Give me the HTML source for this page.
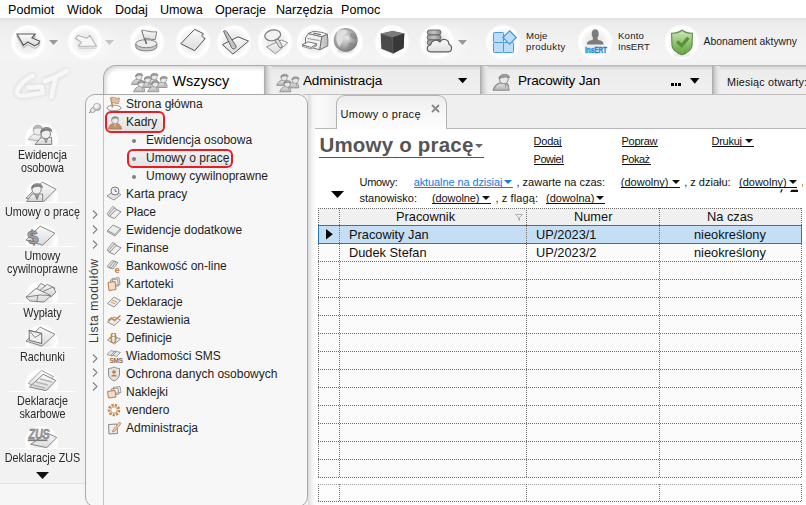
<!DOCTYPE html><html><head><meta charset="utf-8"><style>
*{margin:0;padding:0;box-sizing:border-box}
html,body{width:806px;height:505px;overflow:hidden}
body{position:relative;background:#f2f2f2;font-family:"Liberation Sans",sans-serif;color:#000}
.a{position:absolute;white-space:nowrap}
.u{text-decoration:underline}
.circ{position:absolute;border-radius:50%;background:radial-gradient(circle closest-side,#e6e6e6 0,#eeeeee 45%,#f8f8f8 68%,#fff 80%,#fff 86%,rgba(255,255,255,0) 100%)}
svg{position:absolute;overflow:visible}
</style></head><body>
<div class="a" style="left:0;top:18px;width:806px;height:48px;background:linear-gradient(#e4e4e4 0,#ececec 5px,#f1f1f1 22px,#f4f4f4 40px,#f2f2f2 48px)"></div>
<div class="a" style="left:0;top:483px;width:86px;height:22px;background:#f6f6f6;border-top:1px solid #e2e2e2"></div>
<div class="a" style="left:0;top:0;width:806px;height:18px;background:#fff"></div>
<div class="a " style="left:8px;top:4.33px;font-size:12.6px;line-height:12.6px;color:#000;font-weight:normal;letter-spacing:0px;">Podmiot</div>
<div class="a " style="left:67px;top:4.33px;font-size:12.6px;line-height:12.6px;color:#000;font-weight:normal;letter-spacing:0px;">Widok</div>
<div class="a " style="left:115px;top:4.33px;font-size:12.6px;line-height:12.6px;color:#000;font-weight:normal;letter-spacing:0px;">Dodaj</div>
<div class="a " style="left:160px;top:4.33px;font-size:12.6px;line-height:12.6px;color:#000;font-weight:normal;letter-spacing:0px;">Umowa</div>
<div class="a " style="left:215px;top:4.33px;font-size:12.6px;line-height:12.6px;color:#000;font-weight:normal;letter-spacing:0px;">Operacje</div>
<div class="a " style="left:276px;top:4.33px;font-size:12.6px;line-height:12.6px;color:#000;font-weight:normal;letter-spacing:0px;">Narzędzia</div>
<div class="a " style="left:341px;top:4.33px;font-size:12.6px;line-height:12.6px;color:#000;font-weight:normal;letter-spacing:0px;">Pomoc</div>
<div class="a" style="left:8px;top:23px;width:56px;height:38px;border-radius:19px;background:radial-gradient(ellipse closest-side,rgba(255,255,255,0.45),rgba(255,255,255,0.2) 70%,rgba(255,255,255,0))"></div>
<div class="a" style="left:64px;top:23px;width:57px;height:38px;border-radius:19px;background:radial-gradient(ellipse closest-side,rgba(255,255,255,0.45),rgba(255,255,255,0.2) 70%,rgba(255,255,255,0))"></div>
<div class="a" style="left:418px;top:23px;width:56px;height:38px;border-radius:19px;background:radial-gradient(ellipse closest-side,rgba(255,255,255,0.45),rgba(255,255,255,0.2) 70%,rgba(255,255,255,0))"></div>
<div class="circ" style="left:10px;top:24px;width:36px;height:36px"></div>
<div class="circ" style="left:66.7px;top:24px;width:36px;height:36px"></div>
<div class="circ" style="left:129px;top:24px;width:36px;height:36px"></div>
<div class="circ" style="left:175px;top:24px;width:36px;height:36px"></div>
<div class="circ" style="left:216px;top:24px;width:36px;height:36px"></div>
<div class="circ" style="left:257px;top:24px;width:36px;height:36px"></div>
<div class="circ" style="left:296px;top:24px;width:36px;height:36px"></div>
<div class="circ" style="left:328px;top:24px;width:36px;height:36px"></div>
<div class="circ" style="left:374px;top:24px;width:36px;height:36px"></div>
<div class="circ" style="left:419px;top:24px;width:36px;height:36px"></div>
<div class="circ" style="left:485px;top:24px;width:36px;height:36px"></div>
<div class="circ" style="left:577px;top:24px;width:36px;height:36px"></div>
<div class="circ" style="left:664px;top:24px;width:36px;height:36px"></div>
<svg style="left:48.5px;top:40px" width="9" height="5"><path d="M0 0H9L4.5 5Z" fill="#999"/></svg>
<svg style="left:105px;top:40px" width="9" height="5"><path d="M0 0H9L4.5 5Z" fill="#c4c4c4"/></svg>
<svg style="left:458px;top:40px" width="9" height="5"><path d="M0 0H9L4.5 5Z" fill="#999"/></svg>
<svg style="left:0;top:0" width="806" height="70">
<defs>
<linearGradient id="papg" x1="0" y1="0" x2="0" y2="1"><stop offset="0" stop-color="#fafafa"/><stop offset="1" stop-color="#dcdcdc"/></linearGradient>
<radialGradient id="gg" cx="40%" cy="35%" r="70%"><stop offset="0" stop-color="#e8e8e8"/><stop offset="0.55" stop-color="#a8a8a8"/><stop offset="1" stop-color="#5e5e5e"/></radialGradient>
<linearGradient id="sh" x1="0" y1="0" x2="0" y2="1"><stop offset="0" stop-color="#cfe5bd"/><stop offset="0.5" stop-color="#92c472"/><stop offset="1" stop-color="#5fa23a"/></linearGradient>
<linearGradient id="cl" x1="0" y1="0" x2="0" y2="1"><stop offset="0" stop-color="#fbfbfb"/><stop offset="1" stop-color="#dedede"/></linearGradient>
<linearGradient id="db" x1="0" y1="0" x2="1" y2="0"><stop offset="0" stop-color="#9a9a9a"/><stop offset="0.5" stop-color="#c4c4c4"/><stop offset="1" stop-color="#8a8a8a"/></linearGradient>
</defs>
<!-- back arrow -->
<path d="M16.9 36.5 L35.3 36.5 L31.8 40.3 L39.8 43.8 L38.1 46.6 L34.6 48.3 L27.7 44.5 L23.5 47.9 Z" fill="none" stroke="#c4c4c4" stroke-width="1.3" stroke-linejoin="round"/>
<path d="M16.9 34 L35.3 34 L31.8 37.8 L39.8 41.3 L38.1 44.1 L34.6 45.8 L27.7 42 L23.5 45.4 Z" fill="url(#papg)" stroke="#5a5a5a" stroke-width="1.15" stroke-linejoin="round"/>
<!-- forward arrow (disabled) -->
<path d="M78.8 48.2 L96.6 48.2" stroke="#d2d2d2" stroke-width="1.3"/>
<path d="M75.3 38.3 L77.8 35.3 L86.7 38.3 L89.7 35.3 L96.6 46.2 L78.3 46.2 L81.2 42.3 Z" fill="#f6f6f6" stroke="#b4b4b4" stroke-width="1.1" stroke-linejoin="round"/>
<!-- flag on disc -->
<path d="M135.8 43.7 v3.2 a10.5 4 0 0 0 21 0 v-3.2" fill="#c8c8c8" stroke="#7a7a7a" stroke-width="0.9"/>
<ellipse cx="146.3" cy="43.7" rx="10.5" ry="4" fill="#ececec" stroke="#7a7a7a" stroke-width="0.9"/>
<path d="M146.5 44 L142.3 31" stroke="#6a6a6a" stroke-width="1.6"/>
<path d="M141.8 30.5 C145 29.5 148 32.5 156.8 31.8 L155.2 39.5 C150 40 147 37.5 144.2 38.4 Z" fill="url(#papg)" stroke="#777" stroke-width="0.9"/>
<!-- page -->
<path d="M180.8 43.7 L194.7 29.3 L203.2 33.6 C202.5 36 203.5 38 205.1 38.6 L194.7 50.7 Z" fill="url(#papg)" stroke="#555" stroke-width="1" stroke-linejoin="round"/>
<path d="M203.2 33.6 C201 34.5 201.5 37.5 205.1 38.6" fill="#d4d4d4" stroke="#666" stroke-width="0.9"/>
<!-- pen on paper -->
<path d="M222.5 44.6 L238 36.8 L248.5 41.1 L232.9 54.1 Z" fill="url(#papg)" stroke="#555" stroke-width="1" stroke-linejoin="round"/>
<path d="M223.5 31.2 C225 30 226.5 31 227.5 33 L236 46 C236.5 49 233 50 231.5 47.5 Z" fill="#c6c6c6" stroke="#555" stroke-width="0.9"/>
<!-- magnifier over paper -->
<path d="M266.6 46.8 L281.6 40 L287.8 42.7 L275.5 53.7 Z" fill="url(#papg)" stroke="#888" stroke-width="0.9" stroke-linejoin="round"/>
<path d="M276.5 39.5 L280.5 46" stroke="#777" stroke-width="4.2" stroke-linecap="round"/>
<path d="M276.5 39.5 L280.5 46" stroke="#dedede" stroke-width="2.4" stroke-linecap="round"/>
<ellipse cx="272.7" cy="35.3" rx="8" ry="5.3" transform="rotate(-12 272.7 35.3)" fill="#f2f2f2" stroke="#7a7a7a" stroke-width="1.2"/>
<!-- printer -->
<linearGradient id="prs" x1="0" y1="0" x2="1" y2="0"><stop offset="0" stop-color="#d8d8d8"/><stop offset="1" stop-color="#b8b8b8"/></linearGradient>
<path d="M305.5 37.9 L308.3 33.5 L321.8 36.7 L319.8 49.8 L305.5 45.9 Z" fill="#f0f0f0" stroke="#6a6a6a" stroke-width="0.9" stroke-linejoin="round"/>
<path d="M308.3 33.5 L313.1 31.4 C318 31.5 324 32.5 327.4 34.3 L321.8 36.7 Z" fill="#fafafa" stroke="#6a6a6a" stroke-width="0.9" stroke-linejoin="round"/>
<path d="M321.8 36.7 L327.4 34.3 C328 38 328 42 327.8 45.9 L319.8 49.8 Z" fill="url(#prs)" stroke="#6a6a6a" stroke-width="0.9" stroke-linejoin="round"/>
<path d="M313.5 32.6 L321.5 34.2 L320.5 35.2 L312.8 33.6 Z" fill="#6e6e6e"/>
<path d="M307.5 38.5 L319.5 40.5" stroke="#9a9a9a" stroke-width="1.2"/>
<path d="M302 46.2 L308.3 43.4 L317 45.4 L311.1 48.9 Z" fill="#f4f4f4" stroke="#7a7a7a" stroke-width="0.8" stroke-linejoin="round"/>
<path d="M302 44.7 L308.3 41.9 L317 43.9 L311.1 47.4 Z" fill="#fbfbfb" stroke="#6a6a6a" stroke-width="0.9" stroke-linejoin="round"/>
<!-- globe -->
<radialGradient id="gg2" cx="45%" cy="40%" r="62%"><stop offset="0" stop-color="#e2e2e2"/><stop offset="0.5" stop-color="#b4b4b4"/><stop offset="0.85" stop-color="#8a8a8a"/><stop offset="1" stop-color="#6e6e6e"/></radialGradient>
<ellipse cx="345" cy="51" rx="8" ry="2" fill="#000" opacity="0.1"/>
<circle cx="345.7" cy="39.9" r="11.9" fill="url(#gg2)"/>
<path d="M338 31 C341 29 346 29.5 348 31.5 C347 34 344 34 342.5 36.5 C343.5 40 341 44 339.5 47 C336 43 335 36 338 31Z" fill="#eaeaea" opacity="0.75"/>
<path d="M350 33 C353 33 356 36 356.5 39 C354 40 352 38.5 350.5 37 Z M349 43 C352 42 355 43 355.5 45 C353 48 350 49.5 347.5 50.5 C347 48 348 45 349 43Z" fill="#7e7e7e" opacity="0.55"/>
<path d="M346 36 C348 35 350 37 349 40 C347 41 345 39 346 36Z" fill="#f0f0f0" opacity="0.6"/>
<!-- cube -->
<path d="M380.7 33.8 L392.5 30.9 L404.3 33.4 L403.6 48 L393.1 53.6 L381.3 48.7 Z" fill="#4a4a4a"/>
<path d="M380.7 33.8 L392.5 30.9 L404.3 33.4 L392.5 37.5 Z" fill="#7a7a7a"/>
<path d="M392.5 37.5 L404.3 33.4 L403.6 48 L393.1 53.6 Z" fill="#383838"/>
<path d="M380.7 33.8 L392.5 37.5 L393.1 53.6" fill="none" stroke="#666" stroke-width="0.6"/>
<!-- database + cloud -->
<g stroke="#5e5e5e" stroke-width="0.9" fill="url(#db)">
<rect x="427.3" y="30" width="13.6" height="5" rx="2.2"/>
<rect x="427.3" y="35" width="13.6" height="5" rx="2.2"/>
<rect x="427.3" y="40" width="13.6" height="5" rx="2.2"/>
</g>
<path d="M430.5 51.8 C426.5 51.8 426 45.5 430.5 45 C431 40.5 437 38.5 440 42 C441.5 38 449 38.5 449 44.5 C452.5 45 452.5 51.8 448.5 51.8 Z" fill="url(#cl)" stroke="#5e5e5e" stroke-width="1.2" stroke-linejoin="round"/>
<!-- moje produkty -->
<g fill="#bcdcf8" stroke="#4a9ae0" stroke-width="1">
<rect x="493.5" y="32.5" width="10" height="10" rx="0.8"/>
<rect x="493.5" y="42.5" width="10" height="10" rx="0.8"/>
<rect x="503.5" y="42.5" width="10" height="10" rx="0.8"/>
<path d="M509.6 30.8 L516.3 37.5 L509.6 44.2 L502.9 37.5 Z" stroke-width="1.3"/>
</g>
<!-- InsERT -->
<ellipse cx="595.2" cy="34" rx="3.5" ry="4.8" fill="#7c7c7c"/>
<path d="M593 38 L597.5 38 L598 40 C602 40.5 603.6 42 603.6 44.6 L586.8 44.6 C586.8 42 588.5 40.5 592.5 40 Z" fill="#7c7c7c"/>
<text x="0" y="0" transform="translate(585,52.6) scale(0.78,1)" font-family="Liberation Sans" font-weight="bold" font-size="8.2" fill="#1a86d9" stroke="#1a86d9" stroke-width="0.35">InsERT</text>
<!-- shield -->
<ellipse cx="682" cy="55" rx="9" ry="2" fill="#000" opacity="0.07"/>
<path d="M682 30.2 C679 32.3 675 33.3 671.6 33.3 L672 45.8 C673 50 677 53 682 54.8 C687 53 691 50 692 45.8 L692.4 33.3 C689 33.3 685 32.3 682 30.2 Z" fill="url(#sh)" stroke="#5e8a4a" stroke-width="1.1"/>
<path d="M682 30.8 L682 54.2" stroke="#fff" stroke-width="0.5" opacity="0.25"/>
<path d="M677.2 41.4 L681.7 45.6 L688.3 37.8" fill="none" stroke="#5a8f3e" stroke-width="3.3" stroke-linejoin="miter"/>
</svg>
<div class="a " style="left:526px;top:30.87px;font-size:9.6px;line-height:9.6px;color:#1a1a1a;font-weight:normal;letter-spacing:0.2px;">Moje</div>
<div class="a " style="left:526px;top:42.17px;font-size:9.6px;line-height:9.6px;color:#1a1a1a;font-weight:normal;letter-spacing:0.35px;">produkty</div>
<div class="a " style="left:618px;top:30.87px;font-size:9.6px;line-height:9.6px;color:#1a1a1a;font-weight:normal;letter-spacing:0.2px;">Konto</div>
<div class="a " style="left:618px;top:42.17px;font-size:9.6px;line-height:9.6px;color:#1a1a1a;font-weight:normal;letter-spacing:0px;">InsERT</div>
<div class="a " style="left:703.5px;top:36.80px;font-size:10.4px;line-height:10.4px;color:#1a1a1a;font-weight:normal;letter-spacing:0px;">Abonament aktywny</div>
<svg style="left:0;top:60px" width="86" height="45"><defs><filter id="gts" x="-30%" y="-30%" width="160%" height="160%"><feGaussianBlur in="SourceAlpha" stdDeviation="2.2"/><feComponentTransfer><feFuncA type="linear" slope="0.16"/></feComponentTransfer><feMerge><feMergeNode/><feMergeNode in="SourceGraphic"/></feMerge></filter></defs><g filter="url(#gts)" fill="none" stroke="#f7f7f7" stroke-width="4.2" stroke-linecap="round" stroke-linejoin="round"><path d="M32.8 15.9 C26 18 18 26 16.9 31.8 C16 36 22 36.5 27 35.5 C33 34.5 39 33.5 42.7 32.8 L41.7 26.8 L28.8 27.3"/><path d="M45 21 C52 19 60 15 66.5 10.9"/><path d="M55.6 17.9 C54 24 52.5 30 51.6 36.7"/></g></svg>
<div class="a" style="left:22px;top:121px;width:40px;height:24px;overflow:hidden"><div class="circ" style="left:2px;top:0.5px;width:35px;height:35px"></div></div>
<div class="a" style="left:9px;top:145px;width:66px;height:1px;background:#fff"></div>
<div class="a" style="left:0;width:85px;text-align:center;top:149.86px;font-size:10.8px;line-height:10.8px;color:#2a2a2a;transform:scaleY(1.13);transform-origin:0 9.14px">Ewidencja</div>
<div class="a" style="left:0;width:85px;text-align:center;top:162.86px;font-size:10.8px;line-height:10.8px;color:#2a2a2a;transform:scaleY(1.13);transform-origin:0 9.14px">osobowa</div>
<div class="a" style="left:22px;top:178px;width:40px;height:24px;overflow:hidden"><div class="circ" style="left:2px;top:0.5px;width:35px;height:35px"></div></div>
<div class="a" style="left:9px;top:202px;width:66px;height:1px;background:#fff"></div>
<div class="a" style="left:0;width:85px;text-align:center;top:206.86px;font-size:10.8px;line-height:10.8px;color:#2a2a2a;transform:scaleY(1.13);transform-origin:0 9.14px">Umowy o pracę</div>
<div class="a" style="left:22px;top:222px;width:40px;height:24px;overflow:hidden"><div class="circ" style="left:2px;top:0.5px;width:35px;height:35px"></div></div>
<div class="a" style="left:9px;top:246px;width:66px;height:1px;background:#fff"></div>
<div class="a" style="left:0;width:85px;text-align:center;top:250.86px;font-size:10.8px;line-height:10.8px;color:#2a2a2a;transform:scaleY(1.13);transform-origin:0 9.14px">Umowy</div>
<div class="a" style="left:0;width:85px;text-align:center;top:263.86px;font-size:10.8px;line-height:10.8px;color:#2a2a2a;transform:scaleY(1.13);transform-origin:0 9.14px">cywilnoprawne</div>
<div class="a" style="left:22px;top:279px;width:40px;height:24px;overflow:hidden"><div class="circ" style="left:2px;top:0.5px;width:35px;height:35px"></div></div>
<div class="a" style="left:9px;top:303px;width:66px;height:1px;background:#fff"></div>
<div class="a" style="left:0;width:85px;text-align:center;top:307.86px;font-size:10.8px;line-height:10.8px;color:#2a2a2a;transform:scaleY(1.13);transform-origin:0 9.14px">Wypłaty</div>
<div class="a" style="left:22px;top:323px;width:40px;height:24px;overflow:hidden"><div class="circ" style="left:2px;top:0.5px;width:35px;height:35px"></div></div>
<div class="a" style="left:9px;top:347px;width:66px;height:1px;background:#fff"></div>
<div class="a" style="left:0;width:85px;text-align:center;top:351.86px;font-size:10.8px;line-height:10.8px;color:#2a2a2a;transform:scaleY(1.13);transform-origin:0 9.14px">Rachunki</div>
<div class="a" style="left:22px;top:367px;width:40px;height:24px;overflow:hidden"><div class="circ" style="left:2px;top:0.5px;width:35px;height:35px"></div></div>
<div class="a" style="left:9px;top:391px;width:66px;height:1px;background:#fff"></div>
<div class="a" style="left:0;width:85px;text-align:center;top:395.86px;font-size:10.8px;line-height:10.8px;color:#2a2a2a;transform:scaleY(1.13);transform-origin:0 9.14px">Deklaracje</div>
<div class="a" style="left:0;width:85px;text-align:center;top:408.86px;font-size:10.8px;line-height:10.8px;color:#2a2a2a;transform:scaleY(1.13);transform-origin:0 9.14px">skarbowe</div>
<div class="a" style="left:22px;top:424px;width:40px;height:24px;overflow:hidden"><div class="circ" style="left:2px;top:0.5px;width:35px;height:35px"></div></div>
<div class="a" style="left:9px;top:448px;width:66px;height:1px;background:#fff"></div>
<div class="a" style="left:0;width:85px;text-align:center;top:452.86px;font-size:10.8px;line-height:10.8px;color:#2a2a2a;transform:scaleY(1.13);transform-origin:0 9.14px">Deklaracje ZUS</div>
<svg style="left:0;top:0" width="86" height="505">
<defs>
<linearGradient id="ng" x1="0" y1="0" x2="0" y2="1"><stop offset="0" stop-color="#fbfbfb"/><stop offset="1" stop-color="#dadada"/></linearGradient>
<linearGradient id="ndk" x1="0" y1="0" x2="0" y2="1"><stop offset="0" stop-color="#9a9a9a"/><stop offset="1" stop-color="#5e5e5e"/></linearGradient>
<linearGradient id="nsk" x1="0" y1="0" x2="0" y2="1"><stop offset="0" stop-color="#f4f4f4"/><stop offset="1" stop-color="#cfcfcf"/></linearGradient>
</defs>
<g stroke="#7a7a7a" stroke-width="0.9" stroke-linejoin="round">
<!-- 1 people -->
<path d="M28.2 139.5 L33 134.5 L40 134 L41 141 Z" fill="url(#ng)" stroke="#aaa"/>
<circle cx="37.9" cy="130.5" r="4.6" fill="#eee" stroke="#aaa"/>
<path d="M33.2 129.5 C33 124 42 123.5 42.6 129 C40 127.5 36 127.5 33.2 129.5Z" fill="#bbb" stroke="#aaa"/>
<path d="M35 144.5 L40.5 138 L51.5 137.5 L51.7 144.5 Z" fill="url(#nsk)"/>
<path d="M44 138 L46 143 L48 138" fill="#aaa" stroke="#888"/>
<circle cx="45.8" cy="134" r="4.7" fill="#efefef"/>
<path d="M40.8 133 C40 126 52 126 51.7 131.5 C49 129.5 44 129.5 40.8 133Z" fill="url(#ndk)"/>
<!-- 2 person + card -->
<path d="M25.9 198.2 L42.3 182.1 L56.2 189.3 L43.8 201.4 Z" fill="url(#ng)"/>
<path d="M26.5 201.5 L32 194 L42.6 194 L42.6 201.5 Z" fill="url(#nsk)"/>
<path d="M35 194.5 L37 199.5 L39 194.5" fill="#999"/>
<circle cx="36.6" cy="189.5" r="4.6" fill="#efefef"/>
<path d="M31.6 188.5 C31 182.5 42.6 182 42.4 187.5 C40 185.8 35 185.8 31.6 188.5Z" fill="url(#ndk)"/>
<!-- 3 $ card -->
<path d="M25.9 240.1 L40.2 226.1 L55 233.3 L42.6 245.1 Z" fill="url(#ng)"/>
</g>
<text x="27.5" y="243.5" font-family="Liberation Sans" font-weight="bold" font-size="19" fill="#a8a8a8" stroke="#6e6e6e" stroke-width="0.7" transform="rotate(-8 35 236)">$</text>
<g stroke="#7a7a7a" stroke-width="0.9" stroke-linejoin="round">
<!-- 4 envelope fan -->
<path d="M36 290 L40.8 283.4 L52 289 L47 296 Z" fill="url(#nsk)"/>
<path d="M39 291 L47.3 284.3 L55 288 L50 296 Z" fill="url(#nsk)"/>
<path d="M42 292 L53 287 L55.9 292 L50.9 297 Z" fill="url(#nsk)"/>
<path d="M25.9 297.1 L36 288.5 L50.9 295.6 L44 302 L30 301 Z" fill="url(#ng)"/>
<path d="M25.9 297.1 L40 295 L50.9 295.6 M36.6 302 L38 295" fill="none"/>
<!-- 5 envelope card -->
<path d="M25.9 341.1 L40.2 327.1 L55 334.3 L42 346.1 Z" fill="url(#ng)"/>
<path d="M29.2 330.4 L41.7 333.4 L41.7 343.5 L29.2 340.2 Z" fill="#f0f0f0" stroke="#777" stroke-width="1.1"/>
<path d="M29.2 330.4 L35 337.5 L41.7 333.4" fill="none"/>
<!-- 6 sheets -->
<path d="M28.3 383.2 L41.4 370.4 L53.8 376.7 L40 389 Z" fill="url(#ng)" stroke="#999"/>
<path d="M29.5 387 L43.2 374.3 L55.9 380.5 L46.1 390.6 Z" fill="url(#ng)"/>
<path d="M40 379 L52 382 M36 382 L48 385 M33 385 L45 388" stroke="#b5b5b5" stroke-width="1.3"/>
<!-- 7 ZUS card -->
<path d="M30.7 444.3 L47.3 433.1 L56.8 437.5 L46.7 447.6 Z" fill="url(#ng)"/>
</g>
<text x="0" y="0" transform="translate(28.6,439.3) scale(0.8,1.06)" font-family="Liberation Sans" font-weight="bold" font-style="italic" font-size="13.6" fill="#9a9a9a" stroke="#7a7a7a" stroke-width="0.4" letter-spacing="-0.3">ZUS</text>
<path d="M27.8 440.3 L47.5 440.3" stroke="#7a7a7a" stroke-width="1.6"/>
</svg>
<svg style="left:36px;top:471.5px" width="13" height="7"><path d="M0 0H13L6.5 7Z" fill="#111"/></svg>
<div class="a" style="left:240px;top:65px;width:566px;height:29px;background:linear-gradient(#b9b9b9 0,#b9b9b9 1px,#dcdcdc 2px,#ececec 6px,#f0f0f0 100%)"></div>
<div class="a" style="left:103px;top:65px;width:161px;height:30px;background:#fff;border-top:1px solid #a9a9a9;border-left:1px solid #a9a9a9;border-top-left-radius:13px;box-shadow:inset 2px 2px 4px rgba(0,0,0,0.16)"></div>
<div class="a" style="left:264px;top:66px;width:9px;height:28px;background:linear-gradient(90deg,#a9a9a9,#cdcdcd 30%,#e8e8e8 70%,rgba(240,240,240,0))"></div>
<div class="a" style="left:480px;top:66px;width:9px;height:28px;background:linear-gradient(90deg,#a9a9a9,#cdcdcd 30%,#e8e8e8 70%,rgba(240,240,240,0))"></div>
<div class="a" style="left:712px;top:66px;width:9px;height:28px;background:linear-gradient(90deg,#a9a9a9,#cdcdcd 30%,#e8e8e8 70%,rgba(240,240,240,0))"></div>
<svg style="left:0;top:0" width="520" height="100"><defs><linearGradient id="pb" x1="0" y1="0" x2="0" y2="1"><stop offset="0" stop-color="#e4e4e4"/><stop offset="1" stop-color="#b4b4b4"/></linearGradient><linearGradient id="ph" x1="0" y1="0" x2="0" y2="1"><stop offset="0" stop-color="#b0b0b0"/><stop offset="1" stop-color="#7c7c7c"/></linearGradient></defs><g transform="translate(130.9,72) scale(1.0)"><path d="M0.5 12.5 C1.5 9 4 7.3 6.5 7.3 L9.5 7.3 C11 7.8 11.6 9.5 11.6 12.5 Z" fill="url(#pb)" stroke="#8a8a8a" stroke-width="0.8" stroke-linejoin="round"/><path d="M8.3 7.6 L9.3 11.5 L10.3 7.6Z" fill="#a0a0a0"/><circle cx="8" cy="4.8" r="3.1" fill="#e8e8e8" stroke="#8a8a8a" stroke-width="0.7"/><path d="M4.6 4.6 C4 0.6 12 0.2 12 3.6 C10 2.9 6.8 3 4.6 4.6Z" fill="url(#ph)" stroke="#808080" stroke-width="0.5"/></g><g transform="translate(146.2,72) scale(1.0)"><path d="M0.5 12.5 C1.5 9 4 7.3 6.5 7.3 L9.5 7.3 C11 7.8 11.6 9.5 11.6 12.5 Z" fill="url(#pb)" stroke="#8a8a8a" stroke-width="0.8" stroke-linejoin="round"/><path d="M8.3 7.6 L9.3 11.5 L10.3 7.6Z" fill="#a0a0a0"/><circle cx="8" cy="4.8" r="3.1" fill="#e8e8e8" stroke="#8a8a8a" stroke-width="0.7"/><path d="M4.6 4.6 C4 0.6 12 0.2 12 3.6 C10 2.9 6.8 3 4.6 4.6Z" fill="url(#ph)" stroke="#808080" stroke-width="0.5"/></g><g transform="translate(139.6,75) scale(1.0)"><path d="M0.5 12.5 C1.5 9 4 7.3 6.5 7.3 L9.5 7.3 C11 7.8 11.6 9.5 11.6 12.5 Z" fill="url(#pb)" stroke="#8a8a8a" stroke-width="0.8" stroke-linejoin="round"/><path d="M8.3 7.6 L9.3 11.5 L10.3 7.6Z" fill="#a0a0a0"/><circle cx="8" cy="4.8" r="3.1" fill="#e8e8e8" stroke="#8a8a8a" stroke-width="0.7"/><path d="M4.6 4.6 C4 0.6 12 0.2 12 3.6 C10 2.9 6.8 3 4.6 4.6Z" fill="url(#ph)" stroke="#808080" stroke-width="0.5"/></g><g transform="translate(155.5,75) scale(1.0)"><path d="M0.5 12.5 C1.5 9 4 7.3 6.5 7.3 L9.5 7.3 C11 7.8 11.6 9.5 11.6 12.5 Z" fill="url(#pb)" stroke="#8a8a8a" stroke-width="0.8" stroke-linejoin="round"/><path d="M8.3 7.6 L9.3 11.5 L10.3 7.6Z" fill="#a0a0a0"/><circle cx="8" cy="4.8" r="3.1" fill="#e8e8e8" stroke="#8a8a8a" stroke-width="0.7"/><path d="M4.6 4.6 C4 0.6 12 0.2 12 3.6 C10 2.9 6.8 3 4.6 4.6Z" fill="url(#ph)" stroke="#808080" stroke-width="0.5"/></g><g transform="translate(133.1,79.3) scale(1.0)"><path d="M0.5 12.5 C1.5 9 4 7.3 6.5 7.3 L9.5 7.3 C11 7.8 11.6 9.5 11.6 12.5 Z" fill="url(#pb)" stroke="#8a8a8a" stroke-width="0.8" stroke-linejoin="round"/><path d="M8.3 7.6 L9.3 11.5 L10.3 7.6Z" fill="#a0a0a0"/><circle cx="8" cy="4.8" r="3.1" fill="#e8e8e8" stroke="#8a8a8a" stroke-width="0.7"/><path d="M4.6 4.6 C4 0.6 12 0.2 12 3.6 C10 2.9 6.8 3 4.6 4.6Z" fill="url(#ph)" stroke="#808080" stroke-width="0.5"/></g><g transform="translate(147.2,79.3) scale(1.0)"><path d="M0.5 12.5 C1.5 9 4 7.3 6.5 7.3 L9.5 7.3 C11 7.8 11.6 9.5 11.6 12.5 Z" fill="url(#pb)" stroke="#8a8a8a" stroke-width="0.8" stroke-linejoin="round"/><path d="M8.3 7.6 L9.3 11.5 L10.3 7.6Z" fill="#a0a0a0"/><circle cx="8" cy="4.8" r="3.1" fill="#e8e8e8" stroke="#8a8a8a" stroke-width="0.7"/><path d="M4.6 4.6 C4 0.6 12 0.2 12 3.6 C10 2.9 6.8 3 4.6 4.6Z" fill="url(#ph)" stroke="#808080" stroke-width="0.5"/></g><g transform="translate(276.2,72.9) scale(1.0)"><path d="M0.5 12.5 C1.5 9 4 7.3 6.5 7.3 L9.5 7.3 C11 7.8 11.6 9.5 11.6 12.5 Z" fill="url(#pb)" stroke="#8a8a8a" stroke-width="0.8" stroke-linejoin="round"/><path d="M8.3 7.6 L9.3 11.5 L10.3 7.6Z" fill="#a0a0a0"/><circle cx="8" cy="4.8" r="3.1" fill="#e8e8e8" stroke="#8a8a8a" stroke-width="0.7"/><path d="M4.6 4.6 C4 0.6 12 0.2 12 3.6 C10 2.9 6.8 3 4.6 4.6Z" fill="url(#ph)" stroke="#808080" stroke-width="0.5"/></g><g transform="translate(287.2,75.4) scale(1.0)"><path d="M0.5 12.5 C1.5 9 4 7.3 6.5 7.3 L9.5 7.3 C11 7.8 11.6 9.5 11.6 12.5 Z" fill="url(#pb)" stroke="#8a8a8a" stroke-width="0.8" stroke-linejoin="round"/><path d="M8.3 7.6 L9.3 11.5 L10.3 7.6Z" fill="#a0a0a0"/><circle cx="8" cy="4.8" r="3.1" fill="#e8e8e8" stroke="#8a8a8a" stroke-width="0.7"/><path d="M4.6 4.6 C4 0.6 12 0.2 12 3.6 C10 2.9 6.8 3 4.6 4.6Z" fill="url(#ph)" stroke="#808080" stroke-width="0.5"/></g><g transform="translate(279.2,79.3) scale(1.0)"><path d="M0.5 12.5 C1.5 9 4 7.3 6.5 7.3 L9.5 7.3 C11 7.8 11.6 9.5 11.6 12.5 Z" fill="url(#pb)" stroke="#8a8a8a" stroke-width="0.8" stroke-linejoin="round"/><path d="M8.3 7.6 L9.3 11.5 L10.3 7.6Z" fill="#a0a0a0"/><circle cx="8" cy="4.8" r="3.1" fill="#e8e8e8" stroke="#8a8a8a" stroke-width="0.7"/><path d="M4.6 4.6 C4 0.6 12 0.2 12 3.6 C10 2.9 6.8 3 4.6 4.6Z" fill="url(#ph)" stroke="#808080" stroke-width="0.5"/></g><g transform="translate(492.5,72.5) scale(1.42)"><path d="M0.5 12.5 C1.5 9 4 7.3 6.5 7.3 L9.5 7.3 C11 7.8 11.6 9.5 11.6 12.5 Z" fill="url(#pb)" stroke="#8a8a8a" stroke-width="0.8" stroke-linejoin="round"/><path d="M8.3 7.6 L9.3 11.5 L10.3 7.6Z" fill="#a0a0a0"/><circle cx="8" cy="4.8" r="3.1" fill="#e8e8e8" stroke="#8a8a8a" stroke-width="0.7"/><path d="M4.6 4.6 C4 0.6 12 0.2 12 3.6 C10 2.9 6.8 3 4.6 4.6Z" fill="url(#ph)" stroke="#808080" stroke-width="0.5"/></g></svg>
<div class="a " style="left:172.5px;top:73.71px;font-size:14.4px;line-height:14.4px;color:#000;font-weight:normal;letter-spacing:0px;">Wszyscy</div>
<div class="a " style="left:303px;top:74.39px;font-size:13.6px;line-height:13.6px;color:#000;font-weight:normal;letter-spacing:-0.2px;">Administracja</div>
<div class="a " style="left:518px;top:74.39px;font-size:13.6px;line-height:13.6px;color:#000;font-weight:normal;letter-spacing:-0.2px;">Pracowity Jan</div>
<div class="a" style="left:671px;top:83px;width:2.6px;height:2.6px;background:#000"></div><div class="a" style="left:674.6px;top:83px;width:2.6px;height:2.6px;background:#000"></div><div class="a" style="left:678.2px;top:83px;width:2.6px;height:2.6px;background:#000"></div>
<svg style="left:458px;top:77.8px" width="9.3" height="5.3"><path d="M0 0H9.3L4.65 5.3Z" fill="#000"/></svg>
<svg style="left:689.8px;top:77.7px" width="9.5" height="5.7"><path d="M0 0H9.5L4.75 5.7Z" fill="#000"/></svg>
<div class="a " style="left:727px;top:77.16px;font-size:10.8px;line-height:10.8px;color:#111;font-weight:normal;letter-spacing:0.18px;">Miesiąc otwarty:</div>
<div class="a" style="left:85px;top:94px;width:223px;height:413px;background:#f7f7f7;border:1px solid #a9a9a9;border-radius:10px"></div>
<div class="a" style="left:103px;top:95px;width:1px;height:410px;background:#c4c4c4"></div>
<div class="a" style="left:106px;top:113px;width:57px;height:18px;border-radius:4px;background:linear-gradient(#f2f2f2,#e3e3e3)"></div>
<div class="a" style="left:128px;top:150px;width:103px;height:16px;border-radius:4px;background:linear-gradient(#f2f2f2,#e3e3e3)"></div>
<div class="a" style="left:88.3px;top:343px;font-size:12px;line-height:12px;letter-spacing:0.6px;color:#3a3a3a;transform:rotate(-90deg);transform-origin:0 0">Lista modułów</div>
<svg style="left:91.5px;top:209.8px" width="6" height="9"><path d="M1 0.5 L5 4.5 L1 8.5" fill="none" stroke="#808080" stroke-width="1.1"/></svg>
<svg style="left:91.5px;top:225.0px" width="6" height="9"><path d="M1 0.5 L5 4.5 L1 8.5" fill="none" stroke="#808080" stroke-width="1.1"/></svg>
<svg style="left:91.5px;top:240.1px" width="6" height="9"><path d="M1 0.5 L5 4.5 L1 8.5" fill="none" stroke="#808080" stroke-width="1.1"/></svg>
<svg style="left:91.5px;top:354.3px" width="6" height="9"><path d="M1 0.5 L5 4.5 L1 8.5" fill="none" stroke="#808080" stroke-width="1.1"/></svg>
<svg style="left:91.5px;top:368.2px" width="6" height="9"><path d="M1 0.5 L5 4.5 L1 8.5" fill="none" stroke="#808080" stroke-width="1.1"/></svg>
<svg style="left:91.5px;top:382.1px" width="6" height="9"><path d="M1 0.5 L5 4.5 L1 8.5" fill="none" stroke="#808080" stroke-width="1.1"/></svg>
<svg style="left:0;top:0" width="110" height="120"><defs><radialGradient id="pin" cx="40%" cy="35%" r="70%"><stop offset="0" stop-color="#fff"/><stop offset="0.6" stop-color="#dcdcdc"/><stop offset="1" stop-color="#8c8c8c"/></radialGradient></defs><path d="M89.2 112.8 L92 110.6" stroke="#555" stroke-width="1"/><ellipse cx="93.3" cy="109.8" rx="3.2" ry="2.3" transform="rotate(-35 93.3 109.8)" fill="#ececec" stroke="#8a8a8a" stroke-width="0.8"/><circle cx="97" cy="106.9" r="3.6" fill="url(#pin)" stroke="#9a9a9a" stroke-width="0.6"/></svg>
<div class="a " style="left:126px;top:97.74px;font-size:12.0px;line-height:12.0px;color:#1e1e1e;font-weight:normal;letter-spacing:0px;">Strona główna</div>
<div class="a " style="left:126px;top:115.74px;font-size:12.0px;line-height:12.0px;color:#1e1e1e;font-weight:normal;letter-spacing:0px;">Kadry</div>
<div class="a" style="left:132px;top:138.6px;width:4px;height:4px;border-radius:50%;background:#808080"></div>
<div class="a " style="left:146px;top:133.74px;font-size:12.0px;line-height:12.0px;color:#1e1e1e;font-weight:normal;letter-spacing:0px;">Ewidencja osobowa</div>
<div class="a" style="left:132px;top:156.6px;width:4px;height:4px;border-radius:50%;background:#808080"></div>
<div class="a " style="left:146px;top:151.74px;font-size:12.0px;line-height:12.0px;color:#1e1e1e;font-weight:normal;letter-spacing:0px;">Umowy o pracę</div>
<div class="a" style="left:132px;top:174.6px;width:4px;height:4px;border-radius:50%;background:#808080"></div>
<div class="a " style="left:146px;top:169.74px;font-size:12.0px;line-height:12.0px;color:#1e1e1e;font-weight:normal;letter-spacing:0px;">Umowy cywilnoprawne</div>
<div class="a " style="left:126px;top:187.74px;font-size:12.0px;line-height:12.0px;color:#1e1e1e;font-weight:normal;letter-spacing:0px;">Karta pracy</div>
<div class="a " style="left:126px;top:205.74px;font-size:12.0px;line-height:12.0px;color:#1e1e1e;font-weight:normal;letter-spacing:0px;">Płace</div>
<div class="a " style="left:126px;top:223.74px;font-size:12.0px;line-height:12.0px;color:#1e1e1e;font-weight:normal;letter-spacing:0px;">Ewidencje dodatkowe</div>
<div class="a " style="left:126px;top:241.74px;font-size:12.0px;line-height:12.0px;color:#1e1e1e;font-weight:normal;letter-spacing:0px;">Finanse</div>
<div class="a " style="left:126px;top:259.74px;font-size:12.0px;line-height:12.0px;color:#1e1e1e;font-weight:normal;letter-spacing:0px;">Bankowość on-line</div>
<div class="a " style="left:126px;top:277.74px;font-size:12.0px;line-height:12.0px;color:#1e1e1e;font-weight:normal;letter-spacing:0px;">Kartoteki</div>
<div class="a " style="left:126px;top:295.74px;font-size:12.0px;line-height:12.0px;color:#1e1e1e;font-weight:normal;letter-spacing:0px;">Deklaracje</div>
<div class="a " style="left:126px;top:313.74px;font-size:12.0px;line-height:12.0px;color:#1e1e1e;font-weight:normal;letter-spacing:0px;">Zestawienia</div>
<div class="a " style="left:126px;top:331.74px;font-size:12.0px;line-height:12.0px;color:#1e1e1e;font-weight:normal;letter-spacing:0px;">Definicje</div>
<div class="a " style="left:126px;top:349.74px;font-size:12.0px;line-height:12.0px;color:#1e1e1e;font-weight:normal;letter-spacing:0px;">Wiadomości SMS</div>
<div class="a " style="left:126px;top:367.74px;font-size:12.0px;line-height:12.0px;color:#1e1e1e;font-weight:normal;letter-spacing:0px;">Ochrona danych osobowych</div>
<div class="a " style="left:126px;top:385.74px;font-size:12.0px;line-height:12.0px;color:#1e1e1e;font-weight:normal;letter-spacing:0px;">Naklejki</div>
<div class="a " style="left:126px;top:403.74px;font-size:12.0px;line-height:12.0px;color:#1e1e1e;font-weight:normal;letter-spacing:0px;">vendero</div>
<div class="a " style="left:126px;top:421.74px;font-size:12.0px;line-height:12.0px;color:#1e1e1e;font-weight:normal;letter-spacing:0px;">Administracja</div>
<svg style="left:0;top:0" width="320" height="505">
<g transform="translate(106,95.5)"><ellipse cx="8" cy="12.5" rx="7" ry="2.8" fill="#f6f6f6" stroke="#8a8a8a" stroke-width="0.9"/><path d="M6.5 12 L5 2.5" stroke="#b88a66" stroke-width="1.6"/><path d="M4.8 2 C8 1 9 3.5 13.5 2.5 L12.5 8 C9 8.5 8 6.5 5.8 7.5 Z" fill="#dcbfa5" stroke="#b98d68" stroke-width="0.8"/></g>
<g transform="translate(106,113.5)"><path d="M2.5 15.5 C3 11 6 10 9 10 C12 10 15 11 15.5 15.5 Z" fill="#c49068" stroke="#a87550" stroke-width="0.8"/><path d="M8 10.5 L9 14 L10 10.5" fill="#ccc"/><circle cx="9" cy="7" r="3.4" fill="#e9e9e9" stroke="#8a8a8a" stroke-width="0.8"/><path d="M5.3 6.5 C5 1.5 13 1.5 13 6 C11 4.5 7.5 4.5 5.3 6.5Z" fill="#909090"/></g>
<g transform="translate(106,185.5)"><path d="M1 10.5 L8 5.5 L15 9 L8 14.5 Z" fill="#e4e4e4" stroke="#8a8a8a" stroke-width="0.9"/><circle cx="9" cy="5.5" r="4" fill="#f4f4f4" stroke="#7a7a7a" stroke-width="1"/><path d="M9 3.2 V5.8 H11" fill="none" stroke="#666" stroke-width="0.9"/></g>
<g transform="translate(106,203.5)"><path d="M1 10.5 L6.5 3 L9 4 L3.5 11.5Z" fill="#e6e6e6" stroke="#8a8a8a" stroke-width="0.8" stroke-linejoin="round"/><path d="M2 12 L8 4.5 L11 5.8 L5 13.2Z" fill="#ececec" stroke="#8a8a8a" stroke-width="0.8" stroke-linejoin="round"/><path d="M3.5 13 L10 6 L15 8.2 L8.5 15Z" fill="#f0f0f0" stroke="#7e7e7e" stroke-width="0.9" stroke-linejoin="round"/></g>
<g transform="translate(106,221.5)"><path d="M1.5 9 L7 3.5 L14.5 7 L9 13 Z" fill="#ececec" stroke="#8a8a8a" stroke-width="0.9" stroke-linejoin="round"/><path d="M1.5 9 L1.8 10.5 L9 14.5 L14.5 8.5 L14.5 7" fill="none" stroke="#8a8a8a" stroke-width="0.9"/></g>
<g transform="translate(106,239.5)"><path d="M1 10.5 L6.5 3 L9 4 L3.5 11.5Z" fill="#e6e6e6" stroke="#8a8a8a" stroke-width="0.8" stroke-linejoin="round"/><path d="M2 12 L8 4.5 L11 5.8 L5 13.2Z" fill="#ececec" stroke="#8a8a8a" stroke-width="0.8" stroke-linejoin="round"/><path d="M3.5 13 L10 6 L15 8.2 L8.5 15Z" fill="#f0f0f0" stroke="#7e7e7e" stroke-width="0.9" stroke-linejoin="round"/></g>
<g transform="translate(106,257.5)"><path d="M1 9 L6 3 L10 4.5 L5 11Z M3 10 L8 3.5 L12 5 L7 11.5Z" fill="#e2e2e2" stroke="#8a8a8a" stroke-width="0.8" stroke-linejoin="round"/><text x="8.5" y="15" font-family="Liberation Sans" font-weight="bold" font-size="9.5" fill="#c97f45">e</text></g>
<g transform="translate(106,275.5)"><path d="M6 3 L13 2 L14 9 L7 10Z M4.5 4.5 L11.5 3.5 L12.5 10.5 L5.5 11.5Z" fill="#eee" stroke="#8a8a8a" stroke-width="0.8"/><path d="M2 7 L9 6 L10 14 L3 15Z" fill="#f3dcc8" stroke="#c27c48" stroke-width="1"/></g>
<g transform="translate(106,293.5)"><path d="M1.5 10 L8 3.5 L14.5 7 L8 13.5 Z" fill="#ececec" stroke="#8a8a8a" stroke-width="0.9" stroke-linejoin="round"/><path d="M6 6.5 L11 8.5 M5 8.5 L9.5 10.5" stroke="#d39a6c" stroke-width="1"/></g>
<g transform="translate(106,311.5)"><path d="M1.5 10.5 L8 5.5 L14.5 8.5 L8 14 Z" fill="#ececec" stroke="#8a8a8a" stroke-width="0.9" stroke-linejoin="round"/><path d="M2 9 L5.5 6.5 L8.5 9 L14.5 4" fill="none" stroke="#c27c48" stroke-width="1.4"/></g>
<g transform="translate(106,329.5)"><path d="M1.5 10.5 L7 6.5 L14.5 9.5 L8.5 14.5 Z" fill="#ececec" stroke="#8a8a8a" stroke-width="0.9" stroke-linejoin="round"/><text x="3.5" y="11" font-family="Liberation Sans" font-weight="bold" font-size="10" fill="#c27c48">{}</text></g>
<g transform="translate(106,347.5)"><path d="M1 7 L5 3 L10 4.5 L6 8.5Z M5 7.5 L9 3.5 L14.5 5 L10.5 9Z" fill="#e6e6e6" stroke="#8a8a8a" stroke-width="0.8" stroke-linejoin="round"/><text x="3.5" y="15" font-family="Liberation Sans" font-weight="bold" font-size="6.5" fill="#9a6a40" letter-spacing="-0.3">SMS</text></g>
<g transform="translate(106,365.5)"><path d="M8 1.5 C6 2.5 4 3 2.5 3 L2.5 8.5 C2.5 12 5 14 8 15.5 C11 14 13.5 12 13.5 8.5 L13.5 3 C12 3 10 2.5 8 1.5Z" fill="#e4e4e4" stroke="#8a8a8a" stroke-width="1"/><circle cx="8" cy="6.5" r="1.8" fill="#c27c48"/><path d="M5 11 C5.5 8.5 10.5 8.5 11 11Z" fill="#c27c48"/></g>
<g transform="translate(106,383.5)"><path d="M7 4 L14 3 L15 9 L8 10Z M5 5.5 L12 4.5 L13 10.5 L6 11.5Z" fill="#eee" stroke="#8a8a8a" stroke-width="0.8"/><path d="M1.5 8 L9 7 L10 13.5 L2.5 14.5Z" fill="#f3dcc8" stroke="#c27c48" stroke-width="1"/></g>
<g transform="translate(106,401.5)"><circle cx="8" cy="8.5" r="5" fill="none" stroke="#c88550" stroke-width="2.6" stroke-dasharray="2.2 1.2"/><circle cx="8" cy="8.5" r="3.2" fill="#fff" stroke="#c88550" stroke-width="0.8"/></g>
<g transform="translate(106,419.5)"><path d="M2.5 5 L11 4.5 L11.5 14 L3 14.5Z" fill="#ededed" stroke="#7a7a7a" stroke-width="0.9"/><path d="M7 10.5 L13.5 2.5 L15 4 L8.5 12 L6.5 12.5Z" fill="#f0d2b8" stroke="#b8784a" stroke-width="0.8"/></g>
</svg>
<div class="a" style="left:104.5px;top:111.3px;width:60.5px;height:22px;border:2px solid #ec1c24;border-radius:6px"></div>
<div class="a" style="left:126.5px;top:148.7px;width:106px;height:19.3px;border:2px solid #ec1c24;border-radius:6px"></div>
<div class="a" style="left:303px;top:94px;width:503px;height:1px;background:#bfbfbf"></div>
<div class="a" style="left:308px;top:95px;width:498px;height:34px;background:#efefef"></div>
<div class="a" style="left:308px;top:95px;width:29px;height:34px;background:linear-gradient(90deg,#dadada 0,#f6f6f6 5px,#fbfbfb 10px,#f4f4f4 22px,#efefef 30px)"></div>
<div class="a" style="left:308px;top:129px;width:8px;height:376px;background:linear-gradient(90deg,#dadada 0,#f3f3f3 4px,#fdfdfd 8px)"></div>
<div class="a" style="left:315px;top:128px;width:491px;height:1px;background:#b9b9b9"></div>
<div class="a" style="left:315px;top:129px;width:491px;height:376px;background:#fff"></div>
<div class="a" style="left:335.5px;top:95px;width:111px;height:34px;background:linear-gradient(#eeeeee,#f9f9f9 60%,#fcfcfc);border:1px solid #b3b3b3;border-bottom:none;border-radius:9px 9px 0 0"></div>
<div class="a " style="left:340.5px;top:108.69px;font-size:11px;line-height:11px;color:#111;font-weight:normal;letter-spacing:0.3px;">Umowy o pracę</div>
<svg style="left:430.5px;top:104px" width="9" height="9"><path d="M1 1 L8 8 M8 1 L1 8" stroke="#8a8a8a" stroke-width="1.9"/></svg>
<div class="a " style="left:319.4px;top:135.05px;font-size:20.5px;line-height:20.5px;color:#555555;font-weight:bold;letter-spacing:0.2px;">Umowy o pracę</div>
<svg style="left:475px;top:144px" width="8" height="4"><path d="M0 0H8L4 4Z" fill="#666"/></svg>
<div class="a" style="left:319px;top:157px;width:165px;height:1px;background:#555"></div>
<div class="a " style="left:533.5px;top:135.69px;font-size:11px;line-height:11px;color:#111;font-weight:normal;letter-spacing:-0.2px;">Dodaj</div>
<div class="a" style="left:533.5px;top:146px;width:28.5px;height:1px;background:#111"></div>
<div class="a " style="left:533.5px;top:153.69px;font-size:11px;line-height:11px;color:#111;font-weight:normal;letter-spacing:-0.45px;">Powiel</div>
<div class="a" style="left:533.5px;top:164px;width:30.5px;height:1px;background:#111"></div>
<div class="a " style="left:621.5px;top:135.69px;font-size:11px;line-height:11px;color:#111;font-weight:normal;letter-spacing:-0.25px;">Popraw</div>
<div class="a" style="left:621.5px;top:146px;width:36.5px;height:1px;background:#111"></div>
<div class="a " style="left:621.5px;top:153.69px;font-size:11px;line-height:11px;color:#111;font-weight:normal;letter-spacing:-0.5px;">Pokaż</div>
<div class="a" style="left:621.5px;top:164px;width:29.5px;height:1px;background:#111"></div>
<div class="a " style="left:711.5px;top:135.69px;font-size:11px;line-height:11px;color:#111;font-weight:normal;letter-spacing:-0.25px;">Drukuj</div>
<svg style="left:745px;top:138.5px" width="8" height="4"><path d="M0 0H8L4.0 4Z" fill="#111"/></svg>
<div class="a" style="left:711.5px;top:146px;width:42.5px;height:1px;background:#111"></div>
<div class="a " style="left:359.5px;top:176.69px;font-size:11px;line-height:11px;color:#111;font-weight:normal;letter-spacing:-0.3px;">Umowy:</div>
<div class="a " style="left:413.7px;top:176.69px;font-size:11px;line-height:11px;color:#1a7ae0;font-weight:normal;letter-spacing:-0.1px;">aktualne na dzisiaj</div>
<svg style="left:504px;top:180px" width="8" height="4"><path d="M0 0H8L4.0 4Z" fill="#1a7ae0"/></svg>
<div class="a" style="left:414px;top:187px;width:99px;height:1px;background:#1a7ae0"></div>
<div class="a " style="left:516.5px;top:176.69px;font-size:11px;line-height:11px;color:#111;font-weight:normal;letter-spacing:0px;">, zawarte na czas:</div>
<div class="a " style="left:620.8px;top:176.69px;font-size:11px;line-height:11px;color:#111;font-weight:normal;letter-spacing:0px;">(dowolny)</div>
<svg style="left:671.5px;top:180px" width="8" height="4"><path d="M0 0H8L4.0 4Z" fill="#111"/></svg>
<div class="a" style="left:621px;top:187px;width:59px;height:1px;background:#111"></div>
<div class="a " style="left:684.2px;top:176.69px;font-size:11px;line-height:11px;color:#111;font-weight:normal;letter-spacing:0px;">, z działu:</div>
<div class="a " style="left:739px;top:176.69px;font-size:11px;line-height:11px;color:#111;font-weight:normal;letter-spacing:0px;">(dowolny)</div>
<svg style="left:788.5px;top:180px" width="8" height="4"><path d="M0 0H8L4.0 4Z" fill="#111"/></svg>
<div class="a" style="left:739px;top:187px;width:58px;height:1px;background:#111"></div>
<div class="a" style="left:802px;top:184px;width:1px;height:3px;background:#e0a060"></div>
<svg style="left:779px;top:188.5px" width="22" height="4"><path d="M3.2 0.3 L1.6 3.5" stroke="#111" stroke-width="1.2"/><path d="M11 3 L12.5 0.8 L19 0.8 L19 3 Z" fill="#111"/></svg>
<div class="a " style="left:359.5px;top:193.49px;font-size:11px;line-height:11px;color:#111;font-weight:normal;letter-spacing:0px;">stanowisko:</div>
<div class="a " style="left:432px;top:193.49px;font-size:11px;line-height:11px;color:#111;font-weight:normal;letter-spacing:-0.1px;">(dowolne)</div>
<svg style="left:482.4px;top:195.5px" width="8" height="4"><path d="M0 0H8L4.0 4Z" fill="#111"/></svg>
<div class="a" style="left:432px;top:203px;width:59px;height:1px;background:#111"></div>
<div class="a " style="left:495.5px;top:193.49px;font-size:11px;line-height:11px;color:#111;font-weight:normal;letter-spacing:0.1px;">, z flagą:</div>
<div class="a " style="left:546px;top:193.49px;font-size:11px;line-height:11px;color:#111;font-weight:normal;letter-spacing:0px;">(dowolna)</div>
<svg style="left:596px;top:195.5px" width="8" height="4"><path d="M0 0H8L4.0 4Z" fill="#111"/></svg>
<div class="a" style="left:546px;top:203px;width:59px;height:1px;background:#111"></div>
<svg style="left:331.2px;top:191px" width="13" height="7"><path d="M0 0H13L6.5 7Z" fill="#000"/></svg>
<div class="a" style="left:318px;top:208px;width:484px;height:17px;background:#f0f0f0"></div>
<div class="a" style="left:318px;top:243px;width:484px;height:235px;background:#fbfbfb"></div>
<div class="a" style="left:318px;top:225px;width:484px;height:19px;background:#c4def5"></div>
<div class="a" style="left:318px;top:208px;width:484px;height:1px;background:repeating-linear-gradient(90deg,#6e6e6e 0,#6e6e6e 1px,transparent 1px,transparent 2px)"></div>
<div class="a" style="left:318px;top:261px;width:484px;height:1px;background:repeating-linear-gradient(90deg,#6e6e6e 0,#6e6e6e 1px,transparent 1px,transparent 2px)"></div>
<div class="a" style="left:318px;top:279px;width:484px;height:1px;background:repeating-linear-gradient(90deg,#6e6e6e 0,#6e6e6e 1px,transparent 1px,transparent 2px)"></div>
<div class="a" style="left:318px;top:297px;width:484px;height:1px;background:repeating-linear-gradient(90deg,#6e6e6e 0,#6e6e6e 1px,transparent 1px,transparent 2px)"></div>
<div class="a" style="left:318px;top:315px;width:484px;height:1px;background:repeating-linear-gradient(90deg,#6e6e6e 0,#6e6e6e 1px,transparent 1px,transparent 2px)"></div>
<div class="a" style="left:318px;top:333px;width:484px;height:1px;background:repeating-linear-gradient(90deg,#6e6e6e 0,#6e6e6e 1px,transparent 1px,transparent 2px)"></div>
<div class="a" style="left:318px;top:351px;width:484px;height:1px;background:repeating-linear-gradient(90deg,#6e6e6e 0,#6e6e6e 1px,transparent 1px,transparent 2px)"></div>
<div class="a" style="left:318px;top:369px;width:484px;height:1px;background:repeating-linear-gradient(90deg,#6e6e6e 0,#6e6e6e 1px,transparent 1px,transparent 2px)"></div>
<div class="a" style="left:318px;top:387px;width:484px;height:1px;background:repeating-linear-gradient(90deg,#6e6e6e 0,#6e6e6e 1px,transparent 1px,transparent 2px)"></div>
<div class="a" style="left:318px;top:405px;width:484px;height:1px;background:repeating-linear-gradient(90deg,#6e6e6e 0,#6e6e6e 1px,transparent 1px,transparent 2px)"></div>
<div class="a" style="left:318px;top:423px;width:484px;height:1px;background:repeating-linear-gradient(90deg,#6e6e6e 0,#6e6e6e 1px,transparent 1px,transparent 2px)"></div>
<div class="a" style="left:318px;top:441px;width:484px;height:1px;background:repeating-linear-gradient(90deg,#6e6e6e 0,#6e6e6e 1px,transparent 1px,transparent 2px)"></div>
<div class="a" style="left:318px;top:459px;width:484px;height:1px;background:repeating-linear-gradient(90deg,#6e6e6e 0,#6e6e6e 1px,transparent 1px,transparent 2px)"></div>
<div class="a" style="left:318px;top:477px;width:484px;height:1px;background:repeating-linear-gradient(90deg,#6e6e6e 0,#6e6e6e 1px,transparent 1px,transparent 2px)"></div>
<div class="a" style="left:318px;top:208px;width:1px;height:270px;background:repeating-linear-gradient(180deg,#6e6e6e 0,#6e6e6e 1px,transparent 1px,transparent 2px)"></div>
<div class="a" style="left:339px;top:208px;width:1px;height:270px;background:repeating-linear-gradient(180deg,#6e6e6e 0,#6e6e6e 1px,transparent 1px,transparent 2px)"></div>
<div class="a" style="left:526px;top:208px;width:1px;height:270px;background:repeating-linear-gradient(180deg,#6e6e6e 0,#6e6e6e 1px,transparent 1px,transparent 2px)"></div>
<div class="a" style="left:659px;top:208px;width:1px;height:270px;background:repeating-linear-gradient(180deg,#6e6e6e 0,#6e6e6e 1px,transparent 1px,transparent 2px)"></div>
<div class="a" style="left:801px;top:208px;width:1px;height:270px;background:repeating-linear-gradient(180deg,#6e6e6e 0,#6e6e6e 1px,transparent 1px,transparent 2px)"></div>
<div class="a" style="left:318px;top:225px;width:484px;height:19px;border:1px solid #1f77d4"></div>
<div class="a" style="left:318px;top:484px;width:484px;height:18px;background:#fdfdfd"></div>
<div class="a" style="left:318px;top:484px;width:484px;height:1px;background:repeating-linear-gradient(90deg,#a0a0a0 0,#a0a0a0 1px,transparent 1px,transparent 2px)"></div>
<div class="a" style="left:318px;top:501px;width:484px;height:1px;background:repeating-linear-gradient(90deg,#6e6e6e 0,#6e6e6e 1px,transparent 1px,transparent 2px)"></div>
<div class="a" style="left:318px;top:484px;width:1px;height:18px;background:repeating-linear-gradient(180deg,#6e6e6e 0,#6e6e6e 1px,transparent 1px,transparent 2px)"></div>
<div class="a" style="left:339px;top:484px;width:1px;height:18px;background:repeating-linear-gradient(180deg,#6e6e6e 0,#6e6e6e 1px,transparent 1px,transparent 2px)"></div>
<div class="a" style="left:526px;top:484px;width:1px;height:18px;background:repeating-linear-gradient(180deg,#6e6e6e 0,#6e6e6e 1px,transparent 1px,transparent 2px)"></div>
<div class="a" style="left:659px;top:484px;width:1px;height:18px;background:repeating-linear-gradient(180deg,#6e6e6e 0,#6e6e6e 1px,transparent 1px,transparent 2px)"></div>
<div class="a" style="left:801px;top:484px;width:1px;height:18px;background:repeating-linear-gradient(180deg,#6e6e6e 0,#6e6e6e 1px,transparent 1px,transparent 2px)"></div>
<div class="a " style="left:396px;top:211.46px;font-size:12.8px;line-height:12.8px;color:#111;font-weight:normal;letter-spacing:0px;">Pracownik</div>
<div class="a " style="left:574px;top:211.46px;font-size:12.8px;line-height:12.8px;color:#111;font-weight:normal;letter-spacing:0px;">Numer</div>
<div class="a " style="left:707px;top:211.46px;font-size:12.8px;line-height:12.8px;color:#111;font-weight:normal;letter-spacing:0px;">Na czas</div>
<svg style="left:515px;top:214px" width="8" height="7"><path d="M0.5 0.5H7.5L4.5 3.5V6.5L3.5 5.5V3.5Z" fill="none" stroke="#aaa" stroke-width="0.9" stroke-linejoin="round"/></svg>
<svg style="left:325.8px;top:229.3px" width="7" height="10.5"><path d="M0 0L6.8 5.3L0 10.6Z" fill="#000"/></svg><svg style="display:none" width="7" height="10"><path d="M0 0L7 5L0 10Z" fill="#000"/></svg>
<div class="a " style="left:349px;top:228.96px;font-size:12.8px;line-height:12.8px;color:#111;font-weight:normal;letter-spacing:0px;">Pracowity Jan</div>
<div class="a " style="left:536px;top:228.96px;font-size:12.8px;line-height:12.8px;color:#111;font-weight:normal;letter-spacing:0px;">UP/2023/1</div>
<div class="a " style="left:694px;top:228.96px;font-size:12.8px;line-height:12.8px;color:#111;font-weight:normal;letter-spacing:0px;">nieokreślony</div>
<div class="a " style="left:349px;top:246.96px;font-size:12.8px;line-height:12.8px;color:#111;font-weight:normal;letter-spacing:0px;">Dudek Stefan</div>
<div class="a " style="left:536px;top:246.96px;font-size:12.8px;line-height:12.8px;color:#111;font-weight:normal;letter-spacing:0px;">UP/2023/2</div>
<div class="a " style="left:694px;top:246.96px;font-size:12.8px;line-height:12.8px;color:#111;font-weight:normal;letter-spacing:0px;">nieokreślony</div>
</body></html>
